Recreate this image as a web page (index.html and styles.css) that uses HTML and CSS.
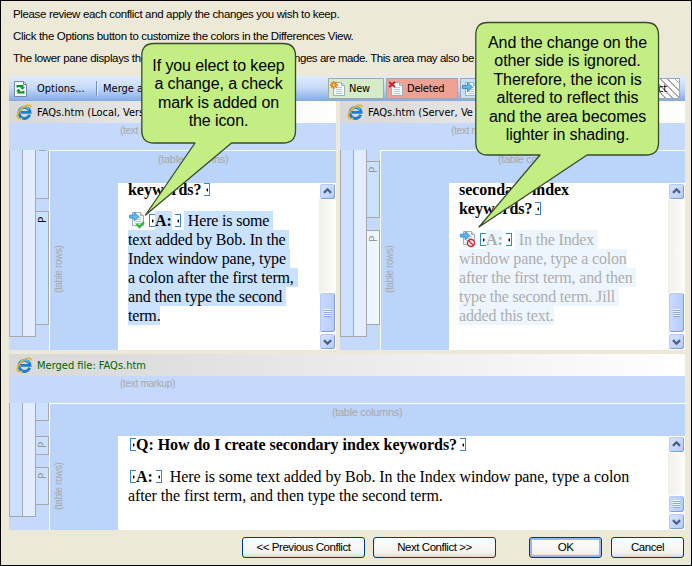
FILE: index.html
```html
<!DOCTYPE html>
<html lang="en">
<head>
<meta charset="utf-8">
<title>Resolve Conflicts</title>
<link rel="stylesheet" href="styles.css">
</head>
<body>
<svg class="defs" width="0" height="0">
  <defs>
    <symbol id="ie" viewBox="0 0 16 16">
      <path d="M13.700 10.800A5.500 5.500 0 1 1 14 8.400H5" fill="none" stroke="#1a7fd0" stroke-width="2.900"/>
      <path d="M12.800 5.700A5 5 0 0 0 4 5.500" fill="none" stroke="#5bc0f4" stroke-width="1.200"/>
      <path d="M2.600 14.600C-.5 13 2.300 6.700 7.200 3.200C11 .5 15.200 .3 14.800 3.500" fill="none" stroke="#eab42c" stroke-width="1.700"/>
      <path d="M2.400 14.600C3.600 15.200 5 14.700 6.300 13.900" fill="none" stroke="#eab42c" stroke-width="1.300"/>
    </symbol>
    <symbol id="page" viewBox="0 0 16 16">
      <path d="M3.500 1.500h8l3 3v10h-11z" fill="#f3f9fb" stroke="#9db0b9"/>
      <path d="M11.500 1.500v3h3" fill="#cfdde4" stroke="#9db0b9"/>
      <path d="M6 6.500h6M6 8.500h6M6 10.500h6M6 12.500h6" stroke="#b7c9d1"/>
    </symbol>
    <symbol id="arrow" viewBox="0 0 16 16">
      <path d="M.5 4.500h5v-3l5 4.500-5 4.500v-3h-5z" fill="#5ab8f3" stroke="#3b8fd0"/>
    </symbol>
    <symbol id="up" viewBox="0 0 17 17"><path d="M4.500 10l4-4 4 4" fill="none" stroke="#4d6185" stroke-width="2.600"/></symbol>
    <symbol id="down" viewBox="0 0 17 17"><path d="M4.500 7l4 4 4-4" fill="none" stroke="#4d6185" stroke-width="2.600"/></symbol>
  </defs>
</svg>
<main class="dialog">
  <div class="intro">
    <p>Please review each conflict and apply the changes you wish to keep.</p>
    <p>Click the Options button to customize the colors in the Differences View.</p>
    <p><span class="lead">The lower pane displays the</span><span class="tail">nges are made. This area may also be</span></p>
  </div>

  <div class="toolbar">
    <svg class="refresh" width="14" height="16" viewBox="0 0 14 16"><path d="M.5.500h9l3 3v12H.5z" fill="#f7fbff" stroke="#7388a8"/><path d="M9.500.500v3h3" fill="none" stroke="#7388a8"/><path d="M3.500 6.500V5h5v1.500M9.500 10v1.500h-5V10" fill="none" stroke="#0b941c" stroke-width="2"/><path d="M6 6.200h5L8.500 8.800zM2 10.300h5L4.500 7.700z" fill="#0b941c"/></svg>
    <span class="opt">Options...</span>
    <i class="sep"></i>
    <span class="merge">Merge a</span>
    <div class="keys">
      <div class="key new"><svg width="16" height="16"><use href="#page"/><path d="M4 0v8M0 4h8M1.200 1.200l5.600 5.600M6.800 1.200L1.200 6.800" stroke="#e8700f" stroke-width="1.300"/><circle cx="4" cy="4" r="1.500" fill="#ffd34d"/></svg>New</div>
      <div class="key deleted"><svg width="16" height="16"><use href="#page"/><path d="M1 1l6 5M7 1L1 6" stroke="#c9202a" stroke-width="2"/></svg>Deleted</div>
      <div class="key changed"><svg width="16" height="16"><use href="#page"/><use href="#arrow"/></svg></div>
      <div class="key conflict">ct</div>
    </div>
  </div>

  <div class="split">
    <section class="pane left">
      <header><svg width="16" height="16"><use href="#ie"/></svg><span>FAQs.htm (Local, Vers</span></header>
      <div class="markup"><span>(text markup)</span></div>
      <div class="work">
        <div class="rail"><i class="c1"></i><i class="c2"></i><div class="c3"><i class="stub"></i><b class="a"></b><b class="b on"><em>P</em></b></div></div>
        <div class="table">
          <div class="cols">(table columns)</div>
          <div class="rows"><span class="rowlabel">(table rows)</span>
            <div class="doc">
              <div class="ln q"><strong>keywords?</strong><i class="tag end"></i></div>
              <div class="para">
                <div class="ln"><svg class="mark" width="16" height="18" viewBox="0 0 16 18"><use href="#page" width="16" height="16"/><use href="#arrow" width="15" height="15"/><path d="M7.500 13l3 3 4.500-5" fill="none" stroke="#2db73a" stroke-width="2.300"/></svg><i class="tag start"></i><strong class="hl">A:</strong><i class="tag end"></i><span class="hl first">Here is some </span></div>
                <div class="ln"><span class="hl">text added by Bob. In the </span></div>
                <div class="ln"><span class="hl">Index window pane, type </span></div>
                <div class="ln"><span class="hl">a colon after the first term, </span></div>
                <div class="ln"><span class="hl">and then type the second </span></div>
                <div class="ln"><span class="hl">term.</span></div>
              </div>
            </div>
            <div class="scroll"><svg class="btn" width="17" height="17"><use href="#up"/></svg><div class="thumb"><i></i></div><svg class="btn" width="17" height="17"><use href="#down"/></svg></div>
          </div>
        </div>
      </div>
    </section>
    <section class="pane right">
      <header><svg width="16" height="16"><use href="#ie"/></svg><span>FAQs.htm (Server, Ve</span></header>
      <div class="markup"><span>(text markup)</span></div>
      <div class="work">
        <div class="rail"><i class="c1"></i><i class="c2"></i><div class="c3"><b class="a"><em>P</em></b><b class="b"><em>P</em></b></div></div>
        <div class="table">
          <div class="cols">(table columns)</div>
          <div class="rows"><span class="rowlabel">(table rows)</span>
            <div class="doc">
              <div class="ln q"><strong>secondary index</strong></div>
              <div class="ln"><strong>keywords?</strong><i class="tag end"></i></div>
              <div class="para off">
                <div class="ln"><svg class="mark" width="16" height="18" viewBox="0 0 16 18"><use href="#page" width="16" height="16"/><use href="#arrow" width="15" height="15"/><circle cx="11" cy="13" r="3.500" fill="#fff" stroke="#cf3038" stroke-width="1.500"/><path d="M8.500 10.500l5 5" stroke="#cf3038" stroke-width="1.400"/></svg><i class="tag start"></i><strong class="hl">A:</strong><i class="tag end"></i><span class="hl first">In the Index </span></div>
                <div class="ln"><span class="hl">window pane, type a colon</span></div>
                <div class="ln"><span class="hl">after the first term, and then </span></div>
                <div class="ln"><span class="hl">type the second term. Jill </span></div>
                <div class="ln"><span class="hl">added this text.</span></div>
              </div>
            </div>
            <div class="scroll"><svg class="btn" width="17" height="17"><use href="#up"/></svg><div class="thumb"><i></i></div><svg class="btn" width="17" height="17"><use href="#down"/></svg></div>
          </div>
        </div>
      </div>
    </section>
  </div>

  <section class="pane merged">
    <header><svg width="16" height="16"><use href="#ie"/></svg><span>Merged file: FAQs.htm</span></header>
    <div class="markup"><span>(text markup)</span></div>
    <div class="work">
      <div class="rail"><i class="c1"></i><i class="c2"></i><div class="c3"><b class="a"></b><b class="m"><em>P</em></b><b class="b"><em>P</em></b></div></div>
      <div class="table">
        <div class="cols">(table columns)</div>
        <div class="rows"><span class="rowlabel">(table rows)</span>
          <div class="doc">
            <div class="ln q"><i class="tag start"></i><strong>Q: How do I create secondary index keywords?</strong><i class="tag end"></i></div>
            <div class="para">
              <div class="ln"><i class="tag start"></i><strong>A:</strong><i class="tag end"></i><span class="first">Here is some text added by Bob. In the Index window pane, type a colon</span></div>
              <div class="ln"><span>after the first term, and then type the second term.</span></div>
            </div>
          </div>
          <div class="scroll"><svg class="btn" width="17" height="17"><use href="#up"/></svg><div class="thumb"><i></i></div><svg class="btn" width="17" height="17"><use href="#down"/></svg></div>
        </div>
      </div>
    </div>
  </section>

  <footer>
    <button class="wide">&lt;&lt; Previous Conflict</button>
    <button class="wide next">Next Conflict &gt;&gt;</button>
    <button class="ok">OK</button>
    <button>Cancel</button>
  </footer>

  <div class="callout keep">
    <svg width="156" height="176"><path d="M13 1.500H142Q154.500 1.500 154.500 14V88.500Q154.500 101 142 101H90.500L4.500 173L54 101H13Q.8 101 .8 88.500V14Q.8 1.500 13 1.500Z"/></svg>
    <p>If you elect to keep<br>a change, a check<br>mark is added on<br>the icon.</p>
  </div>
  <div class="callout ignored">
    <svg width="186" height="208"><path d="M13 1.500H171Q183.500 1.500 183.500 14V121.500Q183.500 134 171 134H112L4 206L65 134H13Q.8 134 .8 121.500V14Q.8 1.500 13 1.500Z"/></svg>
    <p>And the change on the<br>other side is ignored.<br>Therefore, the icon is<br>altered to reflect this<br>and the area becomes<br>lighter in shading.</p>
  </div>
</main>
</body>
</html>
```
FILE: styles.css
```css
* { box-sizing: border-box; }
body { margin: 0; }
p { margin: 0; }
.defs { position: absolute; }

.dialog {
  position: relative;
  width: 692px;
  height: 566px;
  overflow: hidden;
  border: 1px solid #000;
  background: #ece9d8;
  padding: 0 6px 0 8px;
  font: 11px "DejaVu Sans Condensed", "DejaVu Sans", sans-serif;
  color: #000;
  white-space: nowrap;
}

.intro { height: 75px; padding: 2px 0 0 4px; font: 11.5px/22px "Liberation Sans", Arial, sans-serif; letter-spacing: -.35px; }
.intro p { display: flex; height: 22px; }
.lead { width: 281px; }
.tail { letter-spacing: -.45px; }

.toolbar {
  display: flex;
  align-items: center;
  width: 676px;
  height: 25px;
  padding: 0 5px;
  background: linear-gradient(#e2edfd, #c3d8f8 50%, #83a9e6);
}
.refresh { margin-right: 9px; }
.opt { width: 59px; }
.sep { width: 1px; height: 15px; background: #6a8ccb; margin-right: 6px; box-shadow: 1px 0 #f1f9ff; }
.merge { flex: 1; }
.keys { display: flex; gap: 2px; letter-spacing: -.2px; }
.key { display: flex; align-items: center; gap: 3px; height: 21px; padding-left: 1px; border: 1px solid #a6a6a6; }
.key.new { width: 56px; background: #d6ebc8; }
.key.deleted { width: 72px; background: #eea294; }
.key.changed { width: 90px; background: #c6e0fb; }
.key.conflict {
  width: 128px;
  padding-right: 12px;
  justify-content: flex-end;
  background: repeating-linear-gradient(45deg, #fff 0 4px, #aaa 4px 5px);
}

.split { display: flex; gap: 4px; height: 249px; margin-bottom: 4px; }
.pane { display: flex; flex-direction: column; background: #c5d9fa; }
.pane.left { width: 327px; }
.pane.right { width: 345px; }
.pane.merged { width: 676px; height: 176px; }

.pane header {
  display: flex;
  align-items: center;
  gap: 5px;
  height: 22px;
  padding-left: 7px;
  background: linear-gradient(90deg, #d9d9d9, #dcdcdc 15%, #fff);
}
.merged header { color: #006400; }
.markup, .cols, .rowlabel { font-family: "Liberation Sans", Arial, sans-serif; font-size: 11px; color: #a9a9a9; }
.markup { height: 27px; padding: 1px 0 0 111px; font-size: 10px; letter-spacing: -.3px; line-height: 13px; }
.work { display: flex; flex: 1; min-height: 0; }
.rail { display: flex; width: 40px; padding-bottom: 13px; }
.c1, .c2 { width: 13px; border: solid #a7a7a7; border-width: 0 0 1px 1px; background: #cbe0fc; }
.c2 { background: #e2edff; }
.c3 { width: 14px; display: flex; flex-direction: column; border-left: 1px solid #a7a7a7; }
.c3 b {
  width: 13px;
  padding-top: 2px;
  border: solid #a7a7a7;
  border-width: 1px 1px 1px 0;
  background: #cbe0fc;
  color: #999;
}
.c3 em {
  display: block;
  width: 12px;
  height: 9px;
  font: 10.5px/12px "DejaVu Sans", sans-serif;
  writing-mode: vertical-rl;
  transform: rotate(180deg);
}
.rail b.on { background: #c8e2ff; }
.rail b.on em { color: #111; }
.left .stub { width: 7px; height: 1px; margin-left: 3px; background: #a7a7a7; }
.left .a { height: 48px; border-top: 0; }
.left .b { height: 114px; margin-top: 12px; }
.right .a { height: 57px; margin-top: 11px; }
.right .b { height: 95px; margin-top: 12px; background: #edf6ff; }
.merged .a { height: 18px; border-top: 0; }
.merged .m { height: 19px; margin-top: 15px; }
.merged .b { height: 38px; margin-top: 12px; }

.table { display: flex; flex-direction: column; flex: 1; min-width: 0; border: solid #fff; border-width: 1px 0 0 1px; background: #bad4fa; }
.cols { height: 32px; padding-top: 2px; line-height: 13px; letter-spacing: -.33px; }
.left .cols { padding-left: 108px; }
.right .cols { padding-left: 117px; }
.merged .cols { padding-left: 282px; }
.rows { display: flex; flex: 1; min-height: 0; }
.rowlabel {
  width: 68px;
  height: 47px;
  margin-top: 63px;
  padding-right: 2px;
  font-size: 10px;
  line-height: 14px;
  letter-spacing: -.4px;
  writing-mode: vertical-rl;
  transform: rotate(180deg);
}
.merged .rowlabel { margin-top: 27px; }

.doc {
  flex: 1;
  overflow: hidden;
  background: #fff;
  padding-left: 10px;
  font: 16px/19px "Liberation Serif", "Times New Roman", serif;
  letter-spacing: -.09px;
}
.split .doc { letter-spacing: -.17px; }
.doc strong { letter-spacing: -.04px; }
.ln { display: flex; height: 19px; white-space: pre; }
.q { margin-top: -3px; }
.merged .q { margin-top: -1px; }
.para { margin-top: 12px; }
.merged .para { margin-top: 13px; }
.hl { background: #c8e2ff; }
.off .hl { background: #edf6ff; color: #adadad; }
.mark { margin: 0 4px 0 1px; }
.first { padding-left: 4px; }
.merged .first { padding-left: 5px; }
.tag { position: relative; width: 6px; height: 13px; margin-top: 3px; border: 1px solid #3488cc; }
.tag.start { border-right: 0; }
.tag.end { border-left: 0; margin-left: 3px; margin-right: 3px; }
.merged .tag.start { margin-left: 2px; }
.tag::after { content: ""; position: absolute; top: 4px; border: solid transparent; border-width: 2px 0; }
.start::after { left: 2px; border-left: 2px solid #000; }
.end::after { right: 1px; border-right: 2px solid #000; }

.scroll { display: flex; flex-direction: column; width: 17px; background: linear-gradient(90deg, #f0efe8, #fefefb); }
.btn, .thumb { flex: none; border: 1px solid #fff; border-radius: 3px; background: linear-gradient(135deg, #dbe6ff, #b4cafb); box-shadow: inset -1px -1px #7fa0dc, inset 1px 1px #b5caf4; }
.thumb { display: flex; align-items: center; justify-content: center; height: 41px; margin-top: auto; background: linear-gradient(90deg, #cbdafe, #b6cbfb); }
.merged .thumb { height: 18px; }
.thumb i { width: 7px; height: 8px; background: repeating-linear-gradient(#f5f9ff 0 1px, #8aa8e2 1px 2px); }

footer { display: flex; padding: 7px 0 0 233px; }
button {
  width: 73px;
  height: 21px;
  margin: 0 0 0 9px;
  padding: 0;
  border: 1px solid #003c74;
  border-radius: 3px;
  background: linear-gradient(#fff, #f2f1ec 80%, #dbd6cc);
  font: 11.5px/17px "Liberation Sans", Arial, sans-serif;
  letter-spacing: -.45px;
  color: #000;
}
button.wide { width: 123px; margin: 0; }
button.next { margin-left: 8px; }
button.ok { margin-left: 33px; box-shadow: inset 0 0 0 2px #98b7ea; }

.callout { position: absolute; text-align: center; font: 16px/18.4px "Liberation Sans", Arial, sans-serif; letter-spacing: -.1px; }
.callout svg { display: block; }
.callout path { fill: #c2ee84; stroke: #3b4a2d; stroke-width: 1.300; stroke-linejoin: round; }
.callout p { position: absolute; left: 0; }
.keep { left: 140px; top: 41px; }
.keep p { top: 15px; width: 155px; }
.ignored { left: 474px; top: 20px; }
.ignored p { top: 13px; width: 185px; }
```
